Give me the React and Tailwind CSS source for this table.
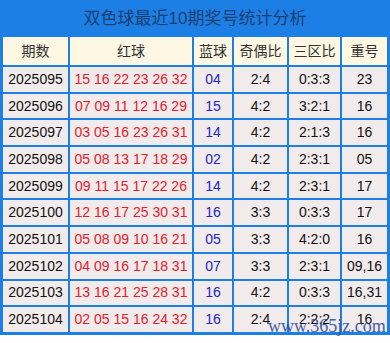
const rows = [
  ['2025095', '15 16 22 23 26 32', '04', '2:4', '0:3:3', '23'],
  ['2025096', '07 09 11 12 16 29', '15', '4:2', '3:2:1', '16'],
  ['2025097', '03 05 16 23 26 31', '14', '4:2', '2:1:3', '16'],
  ['2025098', '05 08 13 17 18 29', '02', '4:2', '2:3:1', '05'],
  ['2025099', '09 11 15 17 22 26', '14', '4:2', '2:3:1', '17'],
  ['2025100', '12 16 17 25 30 31', '16', '3:3', '0:3:3', '17'],
  ['2025101', '05 08 09 10 16 21', '05', '3:3', '4:2:0', '16'],
  ['2025102', '04 09 16 17 18 31', '07', '3:3', '2:3:1', '09,16'],
  ['2025103', '13 16 21 25 28 31', '16', '4:2', '0:3:3', '16,31'],
  ['2025104', '02 05 15 16 24 32', '16', '2:4', '2:2:2', '16'],
]

const heads = ['期数', '红球', '蓝球', '奇偶比', '三区比', '重号']

export default function App() {
  return (
    <div className="w-[390px] h-[343px] bg-white relative" style={{ fontFamily: '"Liberation Sans", "Noto Sans CJK SC", sans-serif' }}>
      <div className="bg-[#1c7fe6] px-[3px] pb-[3px]">
        <div className="h-[37px] flex items-center justify-center text-[17px] text-[#1d3f72]">
          双色球最近10期奖号统计分析
        </div>
        <div className="grid grid-cols-[65px_122px_38px_53px_51px_45px] gap-[2px] text-[14px]">
          {heads.map((h) => (
            <div key={h} className="h-[28px] bg-[#fdf7e3] flex items-center justify-center text-[#333]">
              {h}
            </div>
          ))}
          {rows.map((r) => (
            <>
              <div key={r[0] + 'a'} className="h-[24.7px] bg-[#f1ebeb] flex items-center justify-center text-[#111]">{r[0]}</div>
              <div key={r[0] + 'b'} className="h-[24.7px] bg-[#f1ebeb] flex items-center justify-center text-[#e3202c]">{r[1]}</div>
              <div key={r[0] + 'c'} className="h-[24.7px] bg-[#f1ebeb] flex items-center justify-center text-[#2424c8]">{r[2]}</div>
              <div key={r[0] + 'd'} className="h-[24.7px] bg-[#f1ebeb] flex items-center justify-center text-[#111]">{r[3]}</div>
              <div key={r[0] + 'e'} className="h-[24.7px] bg-[#f1ebeb] flex items-center justify-center text-[#111]">{r[4]}</div>
              <div key={r[0] + 'f'} className="h-[24.7px] bg-[#f1ebeb] flex items-center justify-center text-[#111]">{r[5]}</div>
            </>
          ))}
        </div>
      </div>
      {/* site watermark */}
      <div className="absolute left-[268px] top-[315px] text-[18px] leading-[22px] text-[#28479a] opacity-85" style={{ fontFamily: '"Liberation Serif", serif' }}>
        www.365jz.com
      </div>
    </div>
  )
}
